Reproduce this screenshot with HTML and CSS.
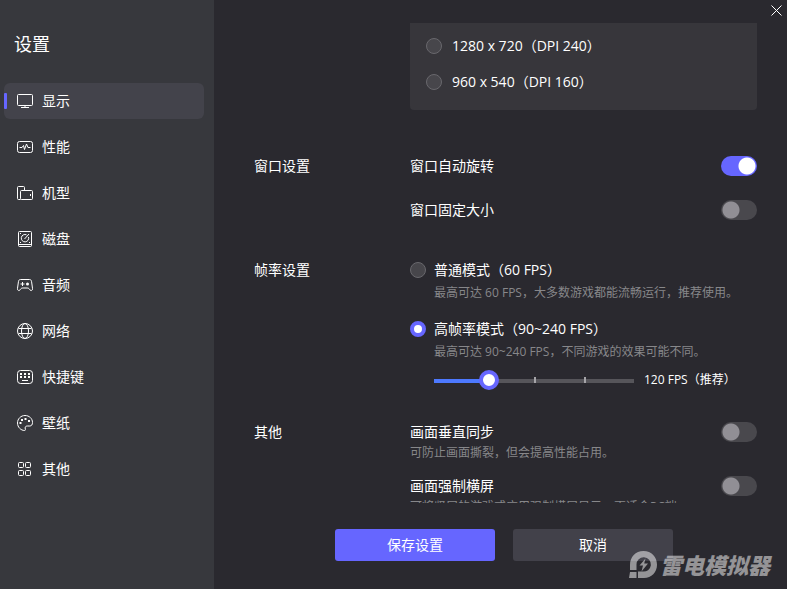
FILE: index.html
```html
<!DOCTYPE html>
<html lang="zh-CN">

<head>
	<meta charset="UTF-8">
	<meta name="viewport" content="width=device-width, initial-scale=1.0">
	<title>设置</title>
	<link rel="stylesheet" href="styles.css">
</head>

<body>
	<aside class="sidebar">
		<h1 class="title">设置</h1>
		<nav class="menu">
			<a href="#display" class="menu-item active">
				<svg class="icon" viewBox="0 0 16 16"><rect x=".5" y="1.5" width="15" height="11" rx="1" /><path d="M8 12.500V14M4 14.500h8" /></svg>
				显示
			</a>
			<a href="#performance" class="menu-item">
				<svg class="icon" viewBox="0 0 16 16"><rect x=".5" y="2.500" width="15" height="11" rx="2" /><path d="M2.500 8.500H5l1.500-2 1 4L9.500 5l1.500 3.500h2.500" /></svg>
				性能
			</a>
			<a href="#model" class="menu-item">
				<svg class="icon" viewBox="0 0 16 16"><path d="M3.500 14.500h-2a1 1 0 0 1-1-1v-11a1 1 0 0 1 1-1h5a1 1 0 0 1 1 1V5" /><rect x="3.500" y="5.500" width="12" height="9" rx="1" /><path d="M13.500 9v2" /></svg>
				机型
			</a>
			<a href="#disk" class="menu-item">
				<svg class="icon" viewBox="0 0 16 16"><rect x="1.500" y=".5" width="13" height="15" rx="1" /><path d="M1.500 13.500h13M7.500 8l4.500-5M9.500 3.800A3.700 3.700 0 1 0 11.500 6" /><path d="M3 2.500h1M3 11.500h1M12 11.500h1" /></svg>
				磁盘
			</a>
			<a href="#audio" class="menu-item">
				<svg class="icon" viewBox="0 0 16 16"><path d="M3.500 2.500h9c1.200 0 1.700.6 2 1.800l1 7c.2 1.500-.4 2.200-1.300 2.200-.8 0-1.300-.4-1.700-1.200-.6-1-1.200-1.300-2.500-1.300H6c-1.300 0-1.900.3-2.500 1.300-.4.8-.9 1.200-1.700 1.200C.9 13.500.3 12.800.5 11.300l1-7c.3-1.200.8-1.800 2-1.800z" /><path d="M5.500 5v4M3.500 7h4" /><circle class="dot" cx="10.500" cy="7" r="1.500" /></svg>
				音频
			</a>
			<a href="#network" class="menu-item">
				<svg class="icon" viewBox="0 0 16 16"><circle cx="8" cy="8" r="7.500" /><ellipse cx="8" cy="8" rx="3.500" ry="7.500" /><path d="M1.500 5.500h13M1.500 10.500h13" /></svg>
				网络
			</a>
			<a href="#hotkeys" class="menu-item">
				<svg class="icon" viewBox="0 0 16 16"><rect x=".5" y="1.500" width="15" height="13" rx="3" /><path class="keys" d="M3 5h2M7 5h2M11 5h2M3 8h2M7 8h2M11 8h2" /><path d="M5 11.500h6" /></svg>
				快捷键
			</a>
			<a href="#wallpaper" class="menu-item">
				<svg class="icon" viewBox="0 0 16 16"><path d="M8 .5C3.800.5.500 3.800.500 8S4 15.500 7.500 15.500c1 0 1-.6.800-1.500-.5-1.800.2-3 2-3h2.500c1.800 0 2.700-1.500 2.700-3.500C15.500 3.500 12.200.5 8 .5z" /><path class="keys" d="M2.500 8h2M4 5h2M7.500 4h2M11 6h2" /></svg>
				壁纸
			</a>
			<a href="#other" class="menu-item">
				<svg class="icon" viewBox="0 0 16 16"><rect x="1.500" y="1.500" width="5" height="5" rx="1" /><rect x="8.500" y="1.500" width="5" height="5" rx="1" /><rect x="1.500" y="9.500" width="5" height="5" rx="1" /><rect x="8.500" y="9.500" width="5" height="5" rx="1" /></svg>
				其他
			</a>
		</nav>
	</aside>

	<main class="main">
		<header class="topbar">
			<button class="btn-close" aria-label="关闭">
				<svg class="icon-close" viewBox="0 0 11 11"><path d="M.5.5l10 10M10.500.5l-10 10" /></svg>
			</button>
		</header>

		<div class="content">
			<section class="section">
				<div class="panel">
					<label class="radio-row"><input type="radio" name="resolution" class="radio">1280 x 720（DPI 240）</label>
					<label class="radio-row"><input type="radio" name="resolution" class="radio">960 x 540（DPI 160）</label>
				</div>
			</section>

			<section class="section window-section">
				<h2 class="section-title">窗口设置</h2>
				<div class="section-body">
					<div class="row">
						<label for="autoRotate">窗口自动旋转</label>
						<input type="checkbox" id="autoRotate" class="switch" checked>
					</div>
					<div class="row">
						<label for="fixedSize">窗口固定大小</label>
						<input type="checkbox" id="fixedSize" class="switch">
					</div>
				</div>
			</section>

			<section class="section fps-section">
				<h2 class="section-title">帧率设置</h2>
				<div class="section-body">
					<div>
						<label class="radio-row"><input type="radio" name="fps" class="radio">普通模式（60 FPS）</label>
						<p class="hint">最高可达 60 FPS，大多数游戏都能流畅运行，推荐使用。</p>
					</div>
					<div>
						<label class="radio-row"><input type="radio" name="fps" class="radio" checked>高帧率模式（90~240 FPS）</label>
						<p class="hint">最高可达 90~240 FPS，不同游戏的效果可能不同。</p>
						<div class="slider-row">
							<input type="range" id="fpsRange" class="slider" min="0" max="4" value="1">
							<label for="fpsRange">120 FPS（推荐）</label>
						</div>
					</div>
				</div>
			</section>

			<section class="section other-section">
				<h2 class="section-title">其他</h2>
				<div class="section-body">
					<div>
						<div class="row">
							<label for="vsync">画面垂直同步</label>
							<input type="checkbox" id="vsync" class="switch">
						</div>
						<p class="hint">可防止画面撕裂，但会提高性能占用。</p>
					</div>
					<div>
						<div class="row">
							<label for="landscape">画面强制横屏</label>
							<input type="checkbox" id="landscape" class="switch">
						</div>
						<p class="hint">可将竖屏的游戏或应用强制横屏显示，更适合PC端</p>
					</div>
				</div>
			</section>
		</div>

		<footer class="footer">
			<button class="btn btn-save">保存设置</button>
			<button class="btn btn-cancel">取消</button>
		</footer>
	</main>

	<div class="brand">
		<svg class="brand-logo" viewBox="0 0 29 28"><path fill-rule="evenodd" d="M14.500 0C22.500 0 28 6 28 13.700S22.500 27 15 27H9v-6.500h4.500a7.200 7.200 0 1 0-6-7V19H1v-5C1 6 6.500 0 14.500 0zM1 21h6.500v6H0z" /><path d="M16.500 7.500l-6 7h3.500l-1.500 6 6.500-8h-3.800z" /></svg>
		<span>雷电模拟器</span>
	</div>
</body>

</html>
```
FILE: styles.css
```css
* {
	box-sizing: border-box;
}

body {
	display: flex;
	height: 100vh;
	margin: 0;
	overflow: hidden;
	background-color: #2a292f;
	color: #fff;
	font-family: "Open Sans", "Noto Sans CJK SC", sans-serif;
	font-size: 14px;
	line-height: 20px;
}

h1,
h2,
p {
	margin: 0;
	font-weight: normal;
}

input {
	appearance: none;
	margin: 0;
}

/* sidebar */
.sidebar {
	flex: none;
	width: 214px;
	padding: 32px 10px 0 4px;
	background-color: #37383d;
}

.title {
	padding-left: 10px;
	font-size: 18px;
	line-height: 24px;
}

.menu {
	display: flex;
	flex-direction: column;
	gap: 10px;
	margin-top: 27px;
}

.menu-item {
	display: flex;
	align-items: center;
	gap: 9px;
	height: 36px;
	padding-left: 13px;
	border-radius: 6px;
	color: #fff;
	text-decoration: none;
}

.menu-item.active {
	padding-left: 0;
	background-color: #43434b;
}

.menu-item.active::before {
	content: "";
	width: 3px;
	height: 16px;
	margin-right: 1px;
	border-radius: 1px;
	background-color: #6666ff;
}

.icon {
	width: 16px;
	height: 16px;
	fill: none;
	stroke: #fff;
}

.icon .dot {
	fill: #fff;
	stroke: none;
}

.icon .keys {
	stroke-width: 2;
}

/* main area */
.main {
	display: flex;
	flex: 1;
	flex-direction: column;
	min-width: 0;
}

.topbar {
	display: flex;
	flex: none;
	justify-content: flex-end;
	height: 23px;
}

.btn-close {
	display: flex;
	padding: 5px;
	border: none;
	background: none;
}

.icon-close {
	width: 11px;
	height: 11px;
	fill: none;
	stroke: #fff;
}

.content {
	flex: 1;
	min-height: 0;
	padding: 0 30px 0 40px;
	overflow: hidden;
}

.section {
	display: grid;
	grid-template-columns: 156px 1fr;
}

.section-title {
	font-size: 14px;
}

.section-body {
	display: flex;
	flex-direction: column;
}

.panel {
	grid-column: 2;
	padding: 5px 16px 10px;
	border-radius: 0 0 4px 4px;
	background-color: #37363b;
}

.panel .radio-row {
	gap: 10px;
	height: 36px;
}

.radio-row {
	display: flex;
	align-items: center;
	gap: 8px;
}

.row {
	display: flex;
	align-items: center;
	justify-content: space-between;
}

.hint {
	color: #87878a;
	font-size: 12px;
	line-height: 18px;
}

.window-section {
	margin-top: 46px;
}

.window-section .section-body {
	gap: 24px;
}

.fps-section {
	margin-top: 40px;
}

.fps-section .section-body {
	gap: 17px;
}

.fps-section .hint {
	margin-top: 4px;
	padding-left: 24px;
}

.other-section {
	margin-top: 32px;
}

.other-section .section-body {
	gap: 14px;
}

.other-section .hint {
	padding-top: 2px;
}

.radio {
	width: 16px;
	height: 16px;
	border: 1px solid #69686d;
	border-radius: 50%;
	background-color: #47464b;
}

.radio:checked {
	border: 4px solid #6666ff;
	background-color: #fff;
}

.switch {
	width: 36px;
	height: 20px;
	border-radius: 10px;
	background: radial-gradient(circle at 10px 10px, #918f95 8px, transparent 9px) #49484d;
}

.switch:checked {
	background: radial-gradient(circle at 26px 10px, #fff 8px, transparent 9px) #6666ff;
}

.slider-row {
	display: flex;
	align-items: center;
	gap: 10px;
	margin-top: 9px;
	padding-left: 24px;
	font-size: 12px;
}

.slider {
	width: 200px;
	height: 20px;
	background:
		linear-gradient(#4d79ff, #4d79ff) 0 9px / 50px 4px no-repeat,
		linear-gradient(#a5a4a8, #a5a4a8) 100px 7px / 2px 6px no-repeat,
		linear-gradient(#a5a4a8, #a5a4a8) 150px 7px / 2px 6px no-repeat,
		linear-gradient(#56555a, #56555a) 0 9px / 100% 4px no-repeat;
}

.slider::-webkit-slider-thumb {
	appearance: none;
	width: 20px;
	height: 20px;
	border: 4px solid #6666ff;
	border-radius: 50%;
	background-color: #fff;
}

/* buttons */
.footer {
	display: flex;
	flex: none;
	justify-content: center;
	gap: 18px;
	padding: 26px 33px 28px 40px;
}

.btn {
	width: 160px;
	height: 32px;
	border: none;
	border-radius: 3px;
	color: #fff;
	font: inherit;
}

.btn-save {
	background-color: #6666ff;
}

.btn-cancel {
	background-color: #42414a;
}

/* brand mark lies over the bottom right corner */
.brand {
	position: absolute;
	right: 17px;
	bottom: 10px;
	display: flex;
	align-items: center;
	gap: 2px;
	color: #fff;
	font-size: 22px;
	font-style: italic;
	font-weight: 900;
	line-height: 28px;
	opacity: 0.5;
	pointer-events: none;
}

.brand-logo {
	width: 29px;
	height: 28px;
	fill: #fff;
}
```
